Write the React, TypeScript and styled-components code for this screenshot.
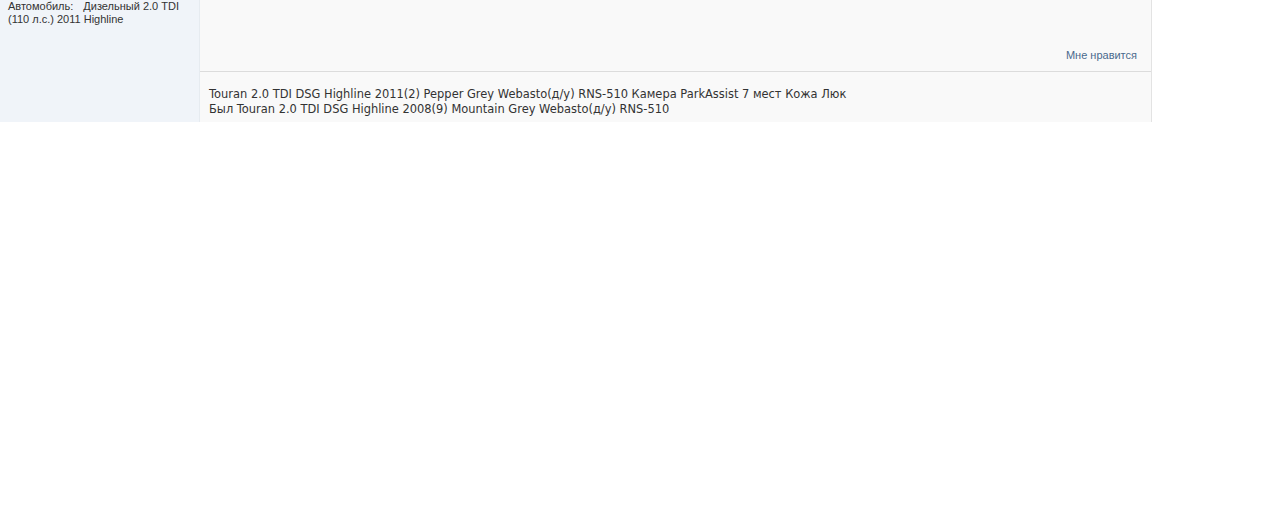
import React from "react";
import styled, { createGlobalStyle } from "styled-components";

const Global = createGlobalStyle`
  html, body { margin: 0; padding: 0; background: #ffffff; }
  body { font-family: "Liberation Sans", Arial, sans-serif; }
`;

const Post = styled.div`
  display: flex;
  width: 1152px;
  height: 122px;
  overflow: hidden;
`;

const Sidebar = styled.div`
  width: 191px;
  flex: none;
  background: #f0f4f9;
  border-right: 1px solid #e6ebf0;
  padding: 0 0 0 8px;
  font-size: 11px;
  line-height: 13px;
  color: #333333;
`;

const InfoLabel = styled.span`
  display: inline-block;
  margin-right: 10px;
`;

const Main = styled.div`
  flex: 1;
  display: flex;
  flex-direction: column;
  background: #f9f9f9;
  border-right: 1px solid #e3e3e3;
`;

const Body = styled.div`
  height: 72px;
  display: flex;
  align-items: flex-end;
  justify-content: flex-end;
  padding: 0 14px 10px 0;
  box-sizing: border-box;
  border-bottom: 1px solid #dcdcdc;
`;

const Like = styled.a`
  font-size: 11px;
  color: #4a6a8d;
  text-decoration: none;
`;

const Signature = styled.div`
  padding: 15px 9px 0;
  font-family: "DejaVu Sans", Verdana, sans-serif;
  font-size: 11.45px;
  line-height: 15px;
  color: #333333;
`;

export default function App() {
  return (
    <>
      <Global />
      <Post>
        <Sidebar>
          <InfoLabel>Автомобиль:</InfoLabel>Дизельный 2.0 TDI (110 л.с.) 2011 Highline
        </Sidebar>
        <Main>
          <Body>
            <Like href="#">Мне нравится</Like>
          </Body>
          <Signature>
            Touran 2.0 TDI DSG Highline 2011(2) Pepper Grey Webasto(д/у) RNS-510 Камера ParkAssist 7 мест Кожа Люк
            <br />
            Был Touran 2.0 TDI DSG Highline 2008(9) Mountain Grey Webasto(д/у) RNS-510
          </Signature>
        </Main>
      </Post>
    </>
  );
}
